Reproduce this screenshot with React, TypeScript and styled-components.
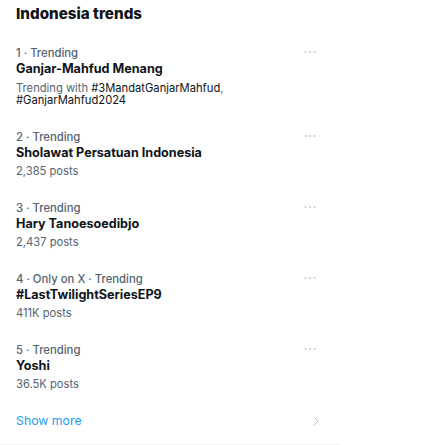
import React from 'react';
import styled, { createGlobalStyle } from 'styled-components';

const GlobalStyle = createGlobalStyle`
  body {
    margin: 0;
    background: #ffffff;
    font-family: Inter, "Noto Sans", "Liberation Sans", sans-serif;
    -webkit-font-smoothing: antialiased;
  }
`;

interface Trend {
  rank: number;
  context: string[];
  name: string;
  posts?: string;
  with?: string[];
}

const trends: Trend[] = [
  {
    rank: 1,
    context: ['Trending'],
    name: 'Ganjar-Mahfud Menang',
    with: ['#3MandatGanjarMahfud', '#GanjarMahfud2024'],
  },
  { rank: 2, context: ['Trending'], name: 'Sholawat Persatuan Indonesia', posts: '2,385 posts' },
  { rank: 3, context: ['Trending'], name: 'Hary Tanoesoedibjo', posts: '2,437 posts' },
  { rank: 4, context: ['Only on X', 'Trending'], name: '#LastTwilightSeriesEP9', posts: '411K posts' },
  { rank: 5, context: ['Trending'], name: 'Yoshi', posts: '36.5K posts' },
];

const Panel = styled.section`
  width: 340px;
  background: #ffffff;
  border-bottom: 1px solid #eff3f4;
`;

const Heading = styled.h2`
  margin: 0;
  padding: 4px 16px 9px;
  font-size: 15.2px;
  line-height: 20px;
  font-weight: 800;
  color: #0f1419;
`;

const Row = styled.div`
  display: flex;
  align-items: flex-start;
  padding: 13px 22px 11px 16px;
`;

const Texts = styled.div`
  flex: 1;
  display: flex;
  flex-direction: column;
  min-width: 0;
`;

const Context = styled.div`
  font-size: 11.3px;
  line-height: 14px;
  font-weight: 500;
  color: #536471;
`;

const Name = styled.div`
  margin-top: 1px;
  font-size: 12.6px;
  line-height: 16px;
  font-weight: 700;
  color: #0f1419;
`;

const Meta = styled.div<{ $wrapped?: boolean }>`
  margin-top: ${(p) => (p.$wrapped ? '5px' : '4px')};
  font-size: 11.2px;
  line-height: 12px;
  color: #536471;
`;

const Tag = styled.span`
  color: #0f1419;
`;

const MoreButton = styled.div`
  width: 16px;
  height: 14px;
  margin-top: -1px;
  display: flex;
  align-items: center;
  justify-content: center;
  color: #c3cacf;
`;

const ShowMore = styled.div`
  display: flex;
  align-items: center;
  justify-content: space-between;
  padding: 12px 19px 15px 16px;
  font-size: 12.3px;
  line-height: 16px;
  color: #1d9bf0;
`;

const Chevron = styled.svg`
  width: 10px;
  height: 10px;
  color: #bcc4ca;
`;

const MoreIcon = () => (
  <svg width="16" height="14" viewBox="0 0 16 14" fill="currentColor">
    <circle cx="3.5" cy="7" r="1" />
    <circle cx="8" cy="7" r="1" />
    <circle cx="12.5" cy="7" r="1" />
  </svg>
);

const TrendRow: React.FC<{ trend: Trend }> = ({ trend }) => (
  <Row>
    <Texts>
      <Context>{[String(trend.rank), ...trend.context].join(' · ')}</Context>
      <Name>{trend.name}</Name>
      {trend.with ? (
        <Meta $wrapped>
          Trending with{' '}
          {trend.with.map((t, i) => (
            <React.Fragment key={t}>
              <Tag>{t}</Tag>
              {i < trend.with!.length - 1 ? ', ' : ''}
            </React.Fragment>
          ))}
        </Meta>
      ) : (
        <Meta>{trend.posts}</Meta>
      )}
    </Texts>
    <MoreButton>
      <MoreIcon />
    </MoreButton>
  </Row>
);

export default function App() {
  return (
    <>
      <GlobalStyle />
      <Panel>
        <Heading>Indonesia trends</Heading>
        {trends.map((t) => (
          <TrendRow key={t.rank} trend={t} />
        ))}
        <ShowMore>
          <span>Show more</span>
          <Chevron viewBox="0 0 10 10" fill="none">
            <path d="M3 1l4 4-4 4" stroke="currentColor" strokeWidth="1" />
          </Chevron>
        </ShowMore>
      </Panel>
    </>
  );
}
